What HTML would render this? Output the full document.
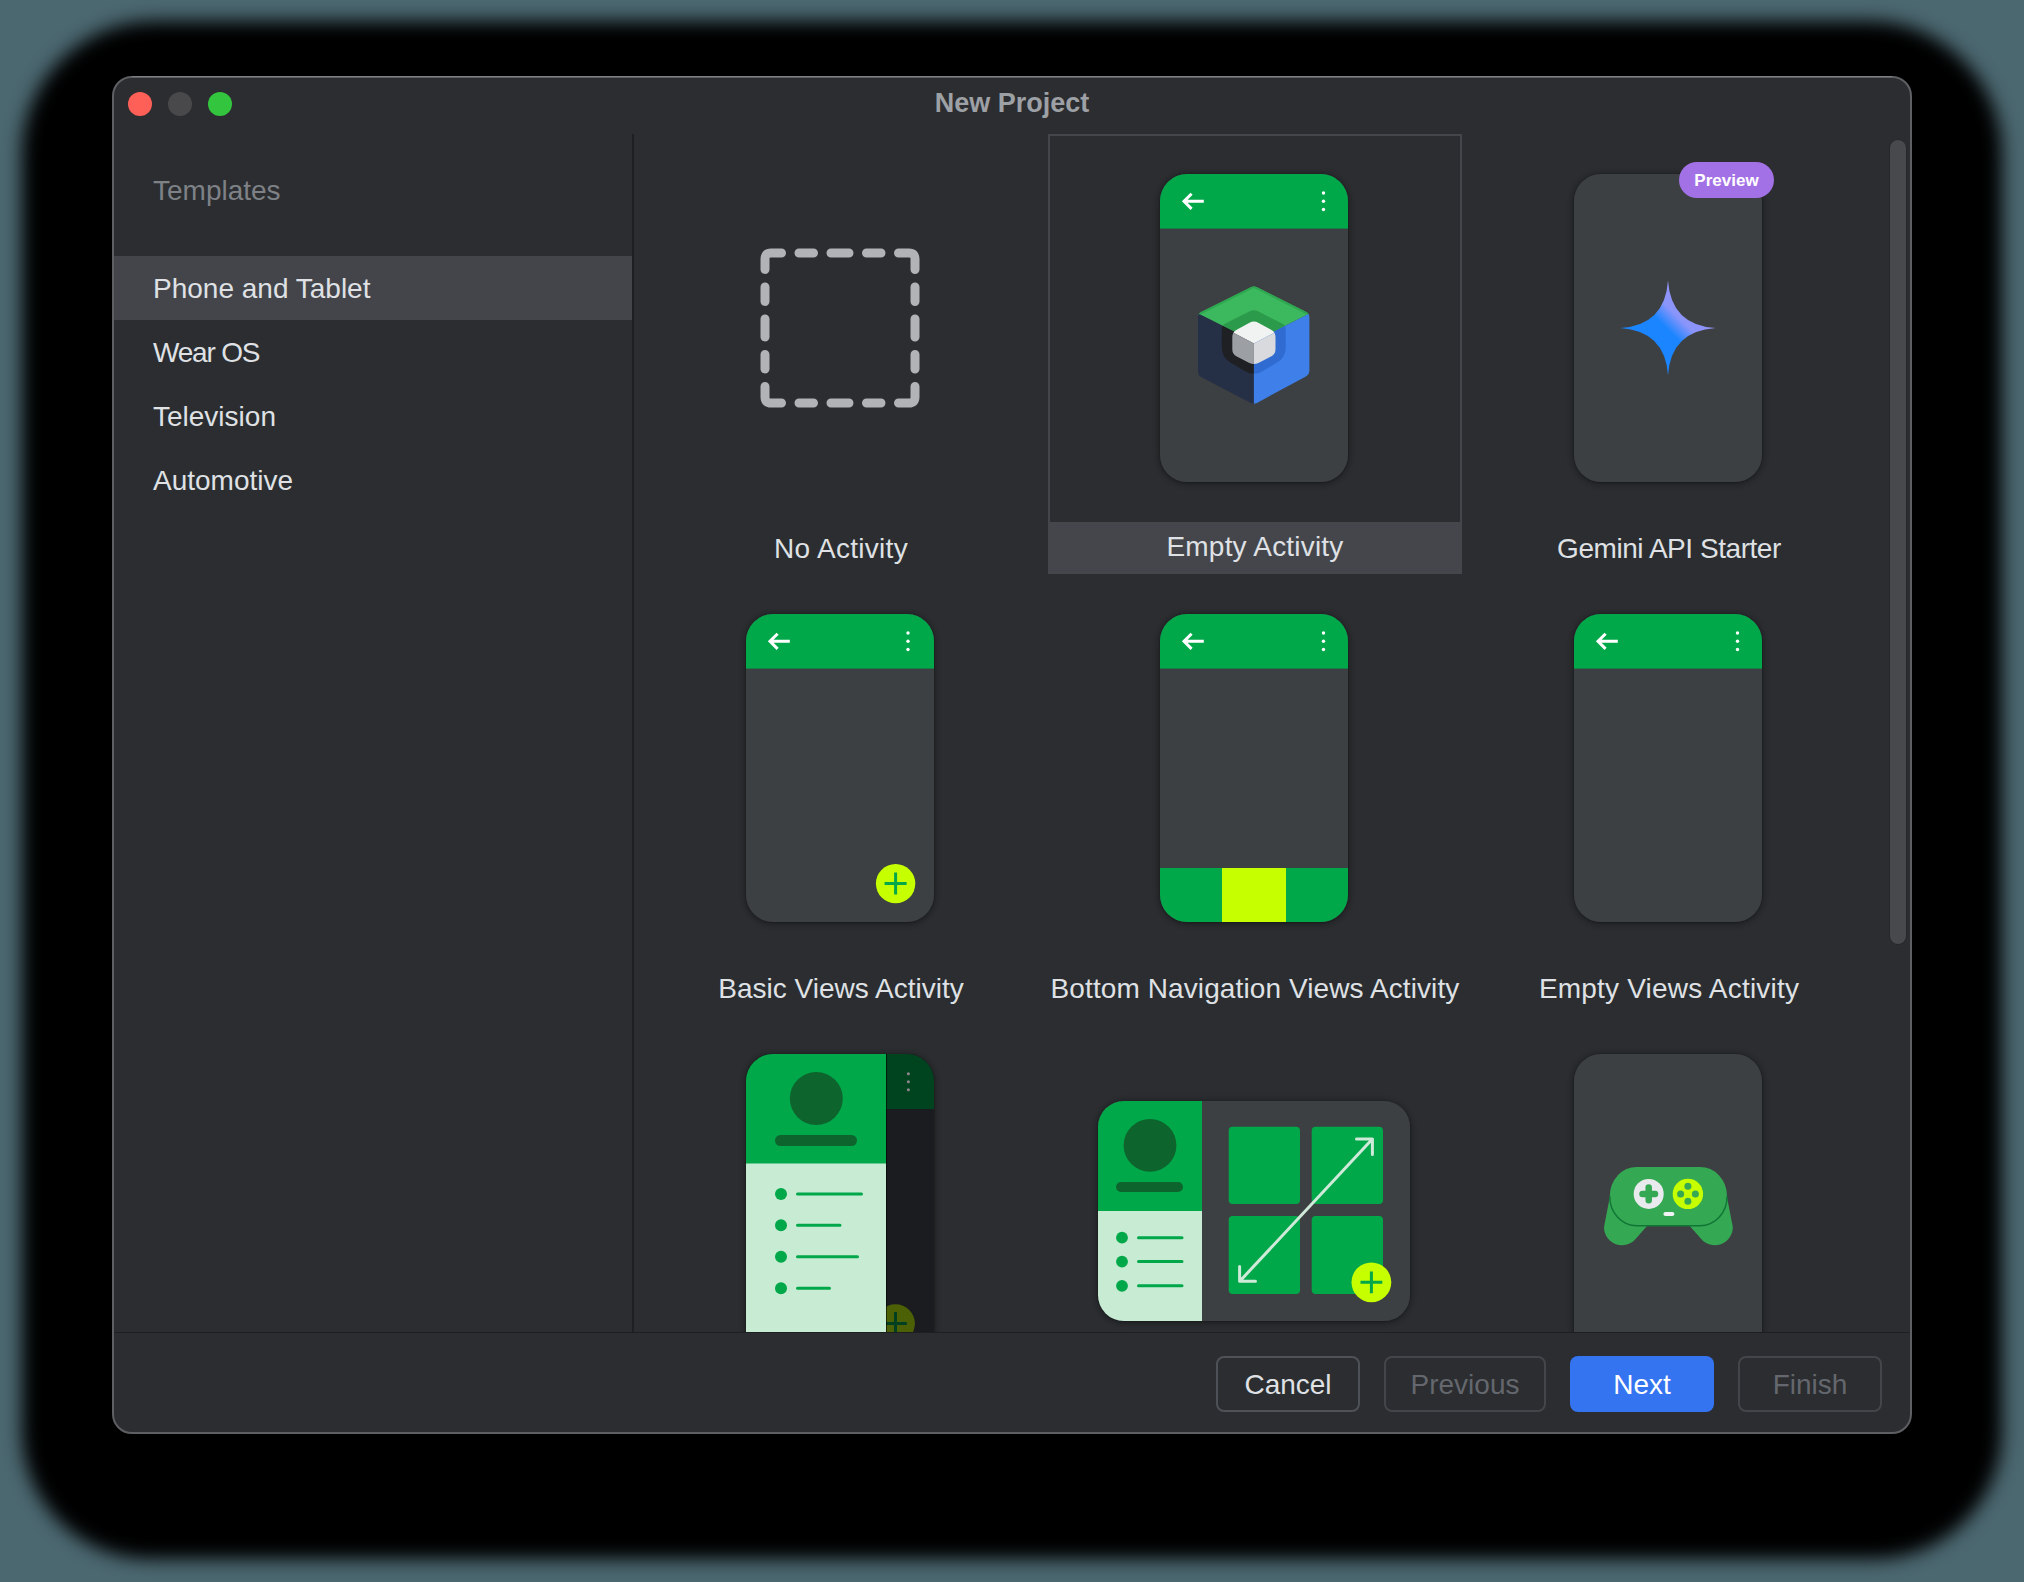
<!DOCTYPE html>
<html>
<head>
<meta charset="utf-8">
<style>
html,body{margin:0;padding:0;}
body{width:2024px;height:1582px;overflow:hidden;position:relative;background:#4b6770;font-family:"Liberation Sans",sans-serif;}
.abs{position:absolute;}
#shadow{position:absolute;left:22px;top:21px;width:1980px;height:1538px;border-radius:133px 133px 128px 128px;background:#000;filter:blur(9px);}
#win{position:absolute;left:112px;top:76px;width:1796px;height:1354px;border:2px solid #5d5f63;border-radius:20px;background:#2b2d30;overflow:hidden;}
.tl{position:absolute;top:92px;width:24px;height:24px;border-radius:50%;}
#title{position:absolute;left:0;width:2024px;top:87px;text-align:center;font-weight:bold;font-size:27px;color:#9da0a5;line-height:32px;}
.side{position:absolute;left:153px;font-size:28px;line-height:32px;color:#dfe1e5;white-space:nowrap;}
.lbl{position:absolute;width:414px;text-align:center;font-size:28px;line-height:32px;color:#dfe1e5;white-space:nowrap;}
.btn{position:absolute;top:1356px;height:52px;border:2px solid #4e5157;border-radius:8px;box-sizing:content-box;font-size:28px;line-height:53px;text-align:center;color:#dfe1e5;}
.btn.dis{border-color:#43454a;color:#64676d;}
</style>
</head>
<body>
<div id="shadow"></div>
<div id="win"></div>
<div class="abs" style="left:132px;top:76px;width:1760px;height:1px;background:#7f8084"></div>
<div class="tl" style="left:128px;background:#fe5f57"></div>
<div class="tl" style="left:168px;background:#49494c"></div>
<div class="tl" style="left:208px;background:#33c53e"></div>
<div id="title">New Project</div>

<!-- sidebar -->
<div class="side" style="top:175px;color:#7e8186">Templates</div>
<div class="abs" style="left:114px;top:256px;width:518px;height:64px;background:#43454a"></div>
<div class="side" style="top:273px">Phone and Tablet</div>
<div class="side" style="top:337px;letter-spacing:-1.2px">Wear OS</div>
<div class="side" style="top:401px">Television</div>
<div class="side" style="top:465px">Automotive</div>
<div class="abs" style="left:632px;top:134px;width:2px;height:1198px;background:#1e1f22"></div>

<!-- grid -->
<div id="grid" class="abs" style="left:634px;top:134px;width:1256px;height:1198px;overflow:hidden">
<svg class="abs" style="left:0;top:0" width="1256" height="1198" viewBox="634 134 1256 1198">
<defs>
<filter id="sh" x="-15%" y="-15%" width="130%" height="130%"><feDropShadow dx="0" dy="1" stdDeviation="4" flood-color="#000" flood-opacity="0.35"/><feDropShadow dx="0" dy="0.5" stdDeviation="1.2" flood-color="#000" flood-opacity="0.35"/></filter>
<clipPath id="c12"><rect x="1160" y="174" width="188" height="308" rx="27"/></clipPath>
<clipPath id="c21"><rect x="746" y="614" width="188" height="308" rx="27"/></clipPath>
<clipPath id="c22"><rect x="1160" y="614" width="188" height="308" rx="27"/></clipPath>
<clipPath id="c23"><rect x="1574" y="614" width="188" height="308" rx="27"/></clipPath>
<clipPath id="c31"><rect x="746" y="1054" width="188" height="308" rx="27"/></clipPath>
<clipPath id="c32"><rect x="1098" y="1101" width="312" height="220" rx="26"/></clipPath>
<linearGradient id="gem" x1="1620" y1="376" x2="1716" y2="280" gradientUnits="userSpaceOnUse">
<stop offset="0" stop-color="#1a85ff"/><stop offset="0.49" stop-color="#1a85ff"/><stop offset="0.61" stop-color="#8a95fa"/><stop offset="0.82" stop-color="#9690f5"/><stop offset="1" stop-color="#c57be8"/>
</linearGradient>
</defs>

<!-- selected card -->
<rect x="1049" y="135" width="412" height="438" fill="none" stroke="#45464b" stroke-width="2"/>
<rect x="1048" y="522" width="414" height="52" fill="#45464b"/>

<!-- No Activity dashed square -->
<g stroke="#b2b3b6" stroke-width="9" stroke-linecap="round" fill="none">
<path d="M765,269.5 V259 Q765,253 771,253 H781.5"/>
<path d="M898.5,253 H909 Q915,253 915,259 V269.5"/>
<path d="M765,386.5 V397 Q765,403 771,403 H781.5"/>
<path d="M898.5,403 H909 Q915,403 915,397 V386.5"/>
<path d="M799,253 H813.5 M831,253 H849 M866.5,253 H881"/>
<path d="M799,403 H813.5 M831,403 H849 M866.5,403 H881"/>
<path d="M765,287 V301.5 M765,319 V337 M765,354.5 V369"/>
<path d="M915,287 V301.5 M915,319 V337 M915,354.5 V369"/>
</g>

<!-- Empty Activity phone -->
<g filter="url(#sh)"><rect x="1160" y="174" width="188" height="308" rx="27" fill="#3c3f42"/></g>
<g clip-path="url(#c12)"><rect x="1160" y="174" width="188" height="54.6" fill="#00a84a"/></g>
<g transform="translate(1160,174)" stroke="#fff" stroke-width="3" fill="none"><path d="M24,27.3 H43.8 M31.6,19.7 L24,27.3 L31.6,34.9"/></g>
<g transform="translate(1160,174)" fill="#fff"><circle cx="163.5" cy="19" r="1.7"/><circle cx="163.5" cy="27.3" r="1.7"/><circle cx="163.5" cy="35.5" r="1.7"/></g>
<!-- compose cube -->
<clipPath id="cOuter"><path d="M1250.3,287.4 Q1253.9,285.6 1257.5,287.4 L1305.8,311.8 Q1309.4,313.6 1309.4,317.6 L1309.4,370.5 Q1309.4,374.5 1305.9,376.4 L1257.4,402.7 Q1253.9,404.6 1250.4,402.7 L1201.5,377.3 Q1198.0,375.4 1198.0,371.4 L1198.0,317.6 Q1198.0,313.6 1201.6,311.8 Z"/></clipPath>
<clipPath id="cNotch"><path d="M1250.3,311.1 Q1253.9,309.3 1257.5,311.1 L1282.1,323.6 Q1285.7,325.4 1285.7,329.4 L1285.7,347.6 Q1285.7,357.6 1277.1,362.6 L1262.5,371.2 Q1253.9,376.2 1245.2,371.2 L1230.5,362.6 Q1221.8,357.6 1221.8,347.6 L1221.8,329.4 Q1221.8,325.4 1225.4,323.6 Z"/></clipPath>
<clipPath id="cCube"><path d="M1249.5,322.7 Q1253.9,320.3 1258.3,322.7 L1271.1,329.8 Q1275.5,332.2 1275.5,337.2 L1275.5,349.2 Q1275.5,354.2 1271.0,356.5 L1258.4,362.9 Q1253.9,365.2 1249.4,362.9 L1236.8,356.5 Q1232.3,354.2 1232.3,349.2 L1232.3,337.2 Q1232.3,332.2 1236.7,329.8 Z"/></clipPath>
<g clip-path="url(#cOuter)">
<polygon points="1190,309.6 1190,270 1320,270 1320,308.3 1253.9,341.5" fill="#3cb95e"/>
<polyline points="1190,317.6 1253.9,285.6 1320,319.2" fill="none" stroke="#2ea850" stroke-width="4"/>
<polygon points="1190,309.6 1253.9,341.5 1253.9,420 1190,420" fill="#253047"/>
<polygon points="1320,308.3 1253.9,341.5 1253.9,420 1320,420" fill="#3f7fe9"/>
</g>
<g clip-path="url(#cNotch)">
<polygon points="1190,309.6 1190,270 1320,270 1320,308.3 1253.9,341.5" fill="#2c9a4b"/>
<polygon points="1190,309.6 1253.9,341.5 1253.9,420 1190,420" fill="#1f2023"/>
<polygon points="1320,308.3 1253.9,341.5 1253.9,420 1320,420" fill="#2f6bd0"/>
</g>
<g clip-path="url(#cCube)">
<polygon points="1220,325.8 1220,300 1290,300 1290,324.6 1253.9,343.5" fill="#f1f2f2"/>
<polygon points="1220,325.8 1253.9,343.5 1253.9,380 1220,380" fill="#9ca0a5"/>
<polygon points="1290,324.6 1253.9,343.5 1253.9,380 1290,380" fill="#d8dadd"/>
</g>

<!-- Gemini phone -->
<g filter="url(#sh)"><rect x="1574" y="174" width="188" height="308" rx="27" fill="#3c3f42"/></g>
<path d="M1668,280.4 Q1671,325 1715.6,328 Q1671,331 1668,375.3 Q1665,331 1620.4,328 Q1665,325 1668,280.4 Z" fill="url(#gem)"/>
<rect x="1679" y="162" width="95" height="36" rx="18" fill="#a371e6"/>
<text x="1726.5" y="185.8" text-anchor="middle" font-family="Liberation Sans" font-weight="bold" font-size="17" fill="#fff">Preview</text>

<!-- Row 2: Basic Views -->
<g filter="url(#sh)"><rect x="746" y="614" width="188" height="308" rx="27" fill="#3c3f42"/></g>
<g clip-path="url(#c21)"><rect x="746" y="614" width="188" height="54.6" fill="#00a84a"/></g>
<g transform="translate(746,614)" stroke="#fff" stroke-width="3" fill="none"><path d="M24,27.3 H43.8 M31.6,19.7 L24,27.3 L31.6,34.9"/></g>
<g transform="translate(746,614)" fill="#fff"><circle cx="162" cy="19" r="1.7"/><circle cx="162" cy="27.3" r="1.7"/><circle cx="162" cy="35.5" r="1.7"/></g>
<circle cx="895.6" cy="883.6" r="19.7" fill="#c6ff00"/>
<path d="M884.6,883.6 H906.6 M895.6,872.6 V894.6" stroke="#00a84a" stroke-width="3"/>

<!-- Row 2: Bottom Navigation -->
<g filter="url(#sh)"><rect x="1160" y="614" width="188" height="308" rx="27" fill="#3c3f42"/></g>
<g clip-path="url(#c22)"><rect x="1160" y="614" width="188" height="54.6" fill="#00a84a"/><rect x="1160" y="868" width="188" height="54.6" fill="#00a84a"/><rect x="1222" y="868" width="64" height="54" fill="#c6ff00"/></g>
<g transform="translate(1160,614)" stroke="#fff" stroke-width="3" fill="none"><path d="M24,27.3 H43.8 M31.6,19.7 L24,27.3 L31.6,34.9"/></g>
<g transform="translate(1160,614)" fill="#fff"><circle cx="163.5" cy="19" r="1.7"/><circle cx="163.5" cy="27.3" r="1.7"/><circle cx="163.5" cy="35.5" r="1.7"/></g>

<!-- Row 2: Empty Views -->
<g filter="url(#sh)"><rect x="1574" y="614" width="188" height="308" rx="27" fill="#3c3f42"/></g>
<g clip-path="url(#c23)"><rect x="1574" y="614" width="188" height="54.6" fill="#00a84a"/></g>
<g transform="translate(1574,614)" stroke="#fff" stroke-width="3" fill="none"><path d="M24,27.3 H43.8 M31.6,19.7 L24,27.3 L31.6,34.9"/></g>
<g transform="translate(1574,614)" fill="#fff"><circle cx="163.5" cy="19" r="1.7"/><circle cx="163.5" cy="27.3" r="1.7"/><circle cx="163.5" cy="35.5" r="1.7"/></g>

<!-- Row 3: Navigation drawer -->
<g filter="url(#sh)"><rect x="746" y="1054" width="188" height="308" rx="27" fill="#1b1c1f"/></g>
<g clip-path="url(#c31)">
<rect x="746" y="1054" width="188" height="55" fill="#00431f"/>
<rect x="746" y="1109" width="188" height="260" fill="#1b1c1f"/>
<circle cx="895.5" cy="1323.6" r="19.4" fill="#4c6106"/>
<path d="M884.5,1323.6 H906.8 M895.5,1312 V1340" stroke="#003f20" stroke-width="3"/>
<rect x="886" y="1054" width="1" height="300" fill="#000" opacity="0.6"/>
<rect x="746" y="1054" width="140" height="110" fill="#00a84a"/>
<rect x="746" y="1163.5" width="140" height="200" fill="#c8ebd4"/>
</g>
<g transform="translate(746,1054)" fill="#8c8a90"><circle cx="162.4" cy="19.7" r="1.5"/><circle cx="162.4" cy="27.8" r="1.5"/><circle cx="162.4" cy="35.7" r="1.5"/></g>
<circle cx="816.3" cy="1098.4" r="26.5" fill="#0d652d"/>
<rect x="775" y="1135" width="82" height="11" rx="5.5" fill="#0d652d"/>
<g fill="#00a84a"><circle cx="781" cy="1193.9" r="6"/><circle cx="781" cy="1225.3" r="6"/><circle cx="781" cy="1256.8" r="6"/><circle cx="781" cy="1288.2" r="6"/></g>
<g stroke="#00a84a" stroke-width="3" stroke-linecap="round"><path d="M797.5,1193.9 H861.5 M797.5,1225.3 H840 M797.5,1256.8 H857.5 M797.5,1288.2 H829.5"/></g>

<!-- Row 3: Responsive tablet -->
<g filter="url(#sh)"><rect x="1098" y="1101" width="312" height="220" rx="26" fill="#3c3f42"/></g>
<g clip-path="url(#c32)">
<rect x="1098" y="1101" width="104" height="110" fill="#00a84a"/>
<rect x="1098" y="1211" width="104" height="110" fill="#c8ebd4"/>
</g>
<circle cx="1150" cy="1145.4" r="26.4" fill="#0d652d"/>
<rect x="1116" y="1182" width="67" height="10" rx="5" fill="#0d652d"/>
<g fill="#00a84a"><circle cx="1122" cy="1237.7" r="5.9"/><circle cx="1122" cy="1261.6" r="5.9"/><circle cx="1122" cy="1285.8" r="5.9"/></g>
<g stroke="#00a84a" stroke-width="3" stroke-linecap="round"><path d="M1138.5,1237.7 H1182 M1138.5,1261.6 H1182 M1138.5,1285.8 H1182"/></g>
<g fill="#00a84a"><rect x="1228.7" y="1126.7" width="71.3" height="77.3" rx="4"/><rect x="1311.7" y="1126.7" width="71.3" height="77.3" rx="4"/><rect x="1228.7" y="1216" width="71.3" height="78" rx="4"/><rect x="1311.7" y="1216" width="71.3" height="78" rx="4"/></g>
<g stroke="#cfeAd8" stroke-width="3" fill="none" stroke-linecap="round" stroke-linejoin="round"><path d="M1240,1281 L1372.4,1139 M1356.5,1139 H1372.4 V1154.5 M1239.6,1266.5 V1281.2 H1255.5"/></g>
<circle cx="1371.4" cy="1282.3" r="19.9" fill="#c6ff00"/>
<path d="M1360.5,1282.3 H1382.3 M1371.4,1271.4 V1293.2" stroke="#00a84a" stroke-width="3"/>

<!-- Row 3: Game activity -->
<g filter="url(#sh)"><rect x="1574" y="1054" width="188" height="308" rx="27" fill="#3c3f42"/></g>
<g fill="#34a853">
<path d="M1610,1196 L1604,1227 A18,18 0 0 0 1636,1238.5 L1647,1226 Z"/>
<path d="M1726.8,1196 L1732.8,1227 A18,18 0 0 1 1700.8,1238.5 L1689.8,1226 Z"/>
<rect x="1609.8" y="1166.9" width="117.2" height="58.8" rx="27" ry="29"/>
</g>
<path d="M1609.8,1195.9 A27,29 0 0 0 1636.8,1225.7 H1700 A27,29 0 0 0 1727,1195.9" fill="none" stroke="#107535" stroke-width="1.4"/>
<g>
</g>
<circle cx="1648.7" cy="1193.9" r="15" fill="#e8eaed"/>
<path d="M1642.5,1193.9 H1655 M1648.7,1187.5 V1200.3" stroke="#34a853" stroke-width="6.5" stroke-linecap="round"/>
<circle cx="1687.9" cy="1193.9" r="15.2" fill="#c6ff00"/>
<g fill="#34a853"><circle cx="1687.9" cy="1186.3" r="3.5"/><circle cx="1680.6" cy="1193.9" r="3.5"/><circle cx="1695.4" cy="1193.9" r="3.5"/><circle cx="1687.9" cy="1201.2" r="3.5"/></g>
<rect x="1663.4" y="1211.9" width="11" height="4.2" rx="2.1" fill="#f1f3f4"/>
</svg>
<div class="lbl" style="left:0;top:399px;letter-spacing:0.3px">No Activity</div>
<div class="lbl" style="left:414px;top:397px;letter-spacing:0.2px">Empty Activity</div>
<div class="lbl" style="left:828px;top:399px;letter-spacing:-0.45px">Gemini API Starter</div>
<div class="lbl" style="left:0;top:839px">Basic Views Activity</div>
<div class="lbl" style="left:414px;top:839px;letter-spacing:0.1px">Bottom Navigation Views Activity</div>
<div class="lbl" style="left:828px;top:839px;letter-spacing:0.2px">Empty Views Activity</div>

</div>

<!-- scrollbar -->
<div class="abs" style="left:1890px;top:140px;width:16px;height:804px;border-radius:8px;background:#48494c;box-shadow:0 0 0 1px rgba(0,0,0,0.12)"></div>

<!-- footer -->
<div class="abs" style="left:114px;top:1332px;width:1796px;height:1px;background:#1e1f22"></div>
<div class="btn" style="left:1216px;width:140px">Cancel</div>
<div class="btn dis" style="left:1384px;width:158px">Previous</div>
<div class="btn" style="left:1570px;width:144px;height:56px;border:none;background:#3574f0;color:#fff;line-height:57px">Next</div>
<div class="btn dis" style="left:1738px;width:140px">Finish</div>
</body>
</html>
